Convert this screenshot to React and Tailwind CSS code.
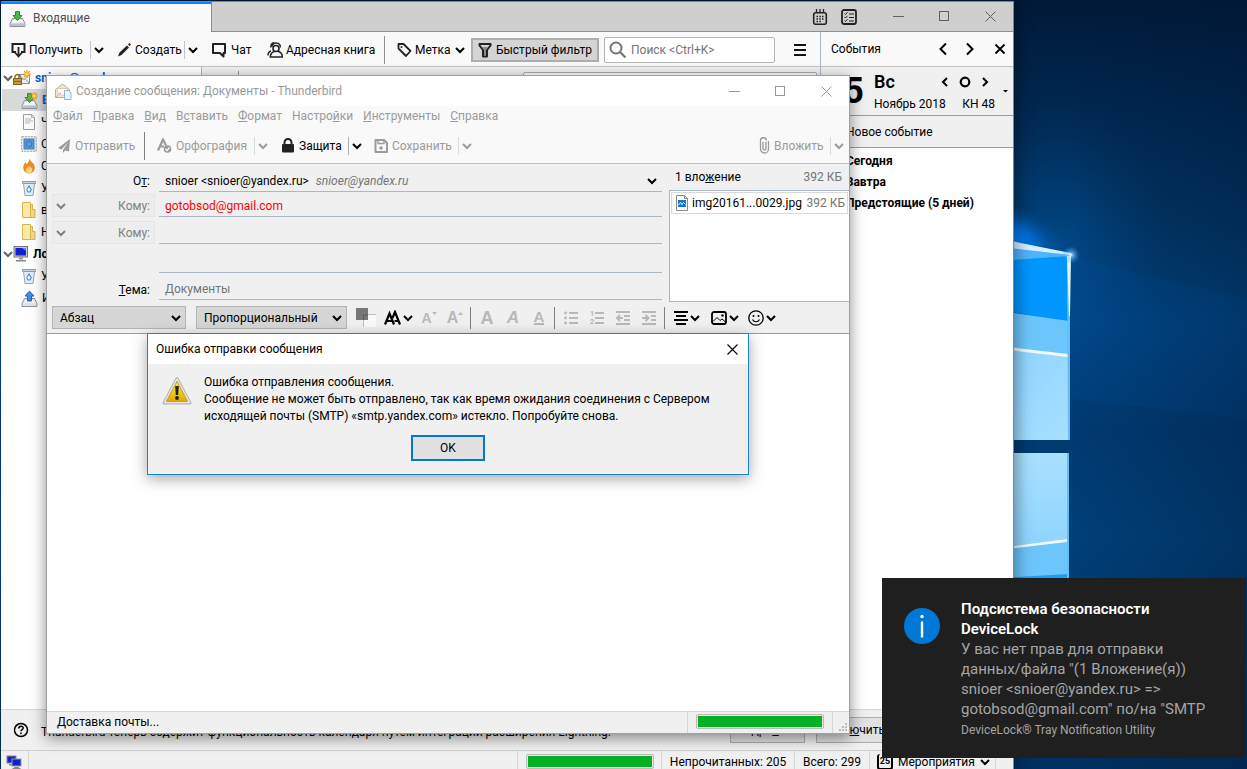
import React from "react";

/* ---------- small drawing helpers ---------- */

function Svg({ w = 16, h = 16, box, className = "", children }) {
  return (
    <svg
      width={w}
      height={h}
      viewBox={box || `0 0 ${w} ${h}`}
      fill="none"
      aria-hidden="true"
      className={`shrink-0 ${className}`}
    >
      {children}
    </svg>
  );
}

function Chevron({ className = "" }) {
  return (
    <Svg w={10} h={10} className={className}>
      <path d="M1 3l4 4 4-4" stroke="currentColor" strokeWidth="2" />
    </Svg>
  );
}

function Divider({ className = "h-[18px] bg-[#c4c4c4]" }) {
  return <span className={`w-px shrink-0 ${className}`} />;
}

function WindowControls({ height, color }) {
  const button = `flex w-[46px] items-center justify-center ${height} ${color}`;
  return (
    <div className="flex shrink-0">
      <button type="button" aria-label="Свернуть" className={button}>
        <Svg w={11} h={11}><path d="M0 5.500h11" stroke="currentColor" /></Svg>
      </button>
      <button type="button" aria-label="Развернуть" className={button}>
        <Svg w={11} h={11}><rect x=".5" y=".5" width="9" height="9" stroke="currentColor" /></Svg>
      </button>
      <button type="button" aria-label="Закрыть" className={button}>
        <Svg w={11} h={11}><path d="M.5.5l10 10M10.500.5l-10 10" stroke="currentColor" /></Svg>
      </button>
    </div>
  );
}

function ProgressBar({ label }) {
  return (
    <div
      role="progressbar"
      aria-label={label}
      className="h-[15px] w-32 shrink-0 rounded-[2px] border border-[#bcbcbc] bg-[#e6e6e6] p-px"
    >
      <div className="h-full w-full bg-[#06b025]" />
    </div>
  );
}

/* ---------- icons ---------- */

function InboxIcon({ star }) {
  return (
    <Svg w={17} h={17}>
      <path d="M3.500 8.500h10l2.500 5v3h-15v-3z" fill="#dfe5ec" stroke="#8b929b" />
      <path d="M1.500 13.500h14v2.500h-14z" fill="#b9c1cb" />
      <path d="M4 10h9l1 3H3z" fill="#f7f9fb" />
      <path d="M6.500 1.500h4v4h2.500L8.500 10.500 4 5.500h2.500z" fill="#4cba3c" stroke="#2b8f20" />
      {star && <Star x={9} y={0} />}
    </Svg>
  );
}

function Star({ x, y }) {
  return (
    <g transform={`translate(${x} ${y})`}>
      <path d="M4 0v8M0 4h8M1 1l6 6M7 1L1 7" stroke="#e59a20" strokeWidth="1.200" />
      <circle cx="4" cy="4" r="1.800" fill="#ffd75e" />
    </g>
  );
}

function AccountIcon() {
  return (
    <Svg w={18} h={17}>
      <path d="M5.500 4.500h11v9h-11z" fill="#f0f0f0" stroke="#8c8c8c" />
      <path d="M5.500 4.500l5.500 5 5.500-5M6 13l4-4.500M16 13l-4-4.500" stroke="#9a9a9a" />
      <path d="M2 9V7a2.500 2.500 0 015 0v2" stroke="#8a6b2c" strokeWidth="1.400" />
      <rect x=".5" y="8.500" width="8" height="6" fill="#c9983c" stroke="#8a6420" />
      <path d="M1 11.500h7" stroke="#8a6420" />
      <Star x={10} y={0} />
    </Svg>
  );
}

function DraftIcon() {
  return (
    <Svg w={16} h={16}>
      <path d="M2.500.5h8l3 3v12h-11z" fill="#fbfbfb" stroke="#9b9b9b" />
      <path d="M10.500.5v3h3M4 5h6M4 7h8M4 9h5" stroke="#b5b5b5" />
    </Svg>
  );
}

function StampIcon() {
  return (
    <Svg w={16} h={16}>
      <rect x=".75" y=".75" width="14.500" height="14.500" fill="#f4f4f4" stroke="#8d959d" strokeDasharray="2 1" />
      <rect x="3" y="3" width="10" height="10" fill="#5b9bd5" stroke="#3c78b4" />
      <circle cx="8" cy="8" r="3" stroke="#3c78b4" />
    </Svg>
  );
}

function FireIcon() {
  return (
    <Svg w={16} h={16}>
      <path d="M8 .5c1 3 5.800 4.500 5.800 9A5.800 5.800 0 018 15.500 5.800 5.800 0 012.200 9.500C2.200 7 4 6 4 4c1 .5 1.500 1.500 1.500 2.500C7 5 8.200 3 8 .5z" fill="#ef8a1f" />
      <path d="M8 8c1.500 1.500 3.300 2 3.300 4A3.200 3.200 0 018 15a3.200 3.200 0 01-3.300-3c0-1.800 2.300-2.200 3.300-4z" fill="#ffd67d" />
    </Svg>
  );
}

function TrashIcon() {
  return (
    <Svg w={16} h={16}>
      <path d="M2.500 3.500h11l-1.500 12H4z" fill="#e4edf5" stroke="#93a5b6" />
      <path d="M1.500 1.500h13v2h-13z" fill="#c5d5e4" stroke="#8a9cae" />
      <path d="M6 9l2-3 2 3M10.500 9l-1.500 3H7L5.500 9.500" stroke="#4a90d0" strokeWidth="1.200" />
    </Svg>
  );
}

function FolderIcon() {
  return (
    <Svg w={16} h={16}>
      <path d="M1.500.5h8v15h-8z" fill="#fbe9a6" stroke="#d9b44a" />
      <path d="M9.500 2.500h2v5h2.500v8H9.500z" fill="#f4d987" stroke="#d9b44a" />
    </Svg>
  );
}

function ComputerIcon() {
  return (
    <Svg w={16} h={16}>
      <rect x="1" y=".5" width="13.500" height="10.500" fill="#c8c8c8" stroke="#777" />
      <rect x="2.500" y="2" width="10.500" height="7.500" fill="#1220d0" />
      <path d="M9 2h4v3z" fill="#6f80ff" />
      <path d="M6 11.500h4v2H6z" fill="#999" />
      <path d="M3 14h10v1.500H3z" fill="#888" />
    </Svg>
  );
}

function OutboxIcon() {
  return (
    <Svg w={17} h={17}>
      <path d="M3.500 8.500h10l2.500 5v3h-15v-3z" fill="#dfe5ec" stroke="#8b929b" />
      <path d="M4 10h9l1 3H3z" fill="#f7f9fb" />
      <path d="M8.500 1l4.500 5h-2.500v5h-4V6H4z" fill="#3f8ee0" stroke="#2265b0" />
    </Svg>
  );
}

function CalendarIcon() {
  return (
    <Svg w={16} h={16}>
      <rect x="1.700" y="3.700" width="12.600" height="11.600" rx="2" stroke="#222" strokeWidth="1.600" />
      <path d="M4.500 0v4M8 0v4M11.500 0v4" stroke="#222" strokeWidth="1.300" />
      <path d="M4.500 7.500h1.500M7.300 7.500h1.500M10 7.500h1.500M4.500 10h1.500M7.300 10h1.500M10 10h1.500M4.500 12.500h1.500M7.300 12.500h1.500" stroke="#222" strokeWidth="1.400" />
    </Svg>
  );
}

function TasksIcon() {
  return (
    <Svg w={16} h={16}>
      <rect x="1" y="1" width="14" height="14" rx="2" stroke="#222" strokeWidth="1.800" />
      <path d="M3.500 4.500l1 1 2-2.200M3.500 8l1 1 2-2.200M3.500 11.500l1 1 2-2.200M8 5h5M8 8.500h5M8 12h5" stroke="#222" />
    </Svg>
  );
}

/* ---------- desktop picture ---------- */

function Wallpaper() {
  return (
    <svg
      className="absolute inset-0 h-full w-full"
      viewBox="0 0 1247 769"
      preserveAspectRatio="xMaxYMid slice"
      aria-hidden="true"
    >
      <defs>
        <linearGradient id="sky" x1="0" y1="0" x2="0" y2="1">
          <stop offset="0" stopColor="#001a38" />
          <stop offset=".14" stopColor="#002750" />
          <stop offset=".28" stopColor="#003564" />
          <stop offset=".42" stopColor="#004480" />
          <stop offset=".56" stopColor="#003a70" />
          <stop offset=".7" stopColor="#004078" />
          <stop offset="1" stopColor="#003060" />
        </linearGradient>
        <radialGradient id="glow">
          <stop offset="0" stopColor="#0a8cff" />
          <stop offset=".4" stopColor="#0074e6" stopOpacity=".8" />
          <stop offset="1" stopColor="#004a90" stopOpacity="0" />
        </radialGradient>
        <radialGradient id="haze">
          <stop offset="0" stopColor="#0068c0" stopOpacity=".35" />
          <stop offset="1" stopColor="#004a90" stopOpacity="0" />
        </radialGradient>
        <radialGradient id="spark">
          <stop offset="0" stopColor="#ffffff" />
          <stop offset=".25" stopColor="#a8dcff" stopOpacity=".6" />
          <stop offset="1" stopColor="#2090ff" stopOpacity="0" />
        </radialGradient>
        <linearGradient id="shade" x1="0" y1="0" x2="1" y2="0">
          <stop offset="0" stopColor="#001530" stopOpacity="0" />
          <stop offset="1" stopColor="#001530" stopOpacity=".3" />
        </linearGradient>
        <linearGradient id="paneTop" x1="0" y1="0" x2="1" y2="1">
          <stop offset="0" stopColor="#8cd2ff" />
          <stop offset="1" stopColor="#a8e0ff" />
        </linearGradient>
        <linearGradient id="paneBottom" x1="0" y1="0" x2="0" y2="1">
          <stop offset="0" stopColor="#a8e0ff" />
          <stop offset="1" stopColor="#8ed4ff" />
        </linearGradient>
      </defs>
      <rect width="1247" height="769" fill="url(#sky)" />
      <ellipse cx="1060" cy="250" rx="110" ry="150" fill="url(#haze)" />
      <path d="M1072 257l175 42v120l-175-20z" fill="#0058a8" opacity=".15" />
      <rect x="1072" width="175" height="769" fill="url(#shade)" />
      <ellipse cx="1008" cy="236" rx="64" ry="32" fill="url(#glow)" transform="rotate(20 1008 236)" />
      <path d="M1000 238l70 16v6h-70z" fill="#4fb4ff" />
      <path d="M1000 239l71 14v2l-71-8z" fill="#d6efff" />
      <path d="M1000 261l69-5v66l-69-12z" fill="#0096ff" />
      <path d="M1000 311l69 10v119h-69z" fill="#6cc6fc" />
      <path d="M1000 348l69 8v84h-69z" fill="url(#paneTop)" />
      <path d="M1000 346l68 8v3l-68-8z" fill="#f2faff" />
      <path d="M1000 453h69v90l-69 7z" fill="url(#paneBottom)" />
      <path d="M1000 549l69-8v48h-69z" fill="#6cc6fc" />
      <path d="M1000 548l67-9v3l-67 8z" fill="#f2faff" />
      <path d="M1000 578l69-4v6h-69z" fill="#1b9cf5" />
      <path d="M1067 256h3v184h-2zM1067 453h2v140h-2z" fill="#5fc0f8" />
      <path d="M1067 256h4l-1 60h-1z" fill="#e4f5ff" />
      <circle cx="1071" cy="255" r="9" fill="url(#spark)" />
    </svg>
  );
}

/* ---------- main window ---------- */

const folders = [
  { name: "snioer@yandex.ru", icon: <AccountIcon />, root: true, blue: true },
  { name: "Входящие", icon: <InboxIcon star />, selected: true, blue: true },
  { name: "Черновики", icon: <DraftIcon /> },
  { name: "Отправленные", icon: <StampIcon /> },
  { name: "Спам", icon: <FireIcon /> },
  { name: "Удалённые", icon: <TrashIcon /> },
  { name: "важное", icon: <FolderIcon /> },
  { name: "Новости", icon: <FolderIcon /> },
  { name: "Локальные папки", icon: <ComputerIcon />, root: true },
  { name: "Удалённые", icon: <TrashIcon /> },
  { name: "Исходящие", icon: <OutboxIcon /> },
];

function FolderTree() {
  return (
    <ul className="w-[201px] shrink-0 border-r border-[#a9b7c9] bg-white">
      {folders.map((f, i) => (
        <li
          key={i}
          className={`ml-px flex h-[22px] items-center gap-1 whitespace-nowrap ${
            f.root ? "pl-px font-bold" : "pl-[19px]"
          } ${f.selected ? "bg-[#d9d9d9] font-bold" : ""} ${f.blue ? "text-[#0060d0]" : "text-black"}`}
        >
          {f.root && <Chevron className="-mr-1 text-[#606060]" />}
          {f.icon}
          <span>{f.name}</span>
        </li>
      ))}
    </ul>
  );
}

function MainToolbar() {
  return (
    <div className="flex h-[35px] shrink-0 items-center whitespace-nowrap border-b border-[#c2c2c2] bg-[#f9f9f9] pl-[10px] pt-px text-black">
      <button type="button" className="flex w-[79px] items-center gap-[3px]">
        <Svg w={15} h={16}>
          <path d="M5 10H1.500V2h12v8H10" stroke="#222" strokeWidth="2" />
          <path d="M7.500 5v9M4 10.500l3.500 4 3.500-4" stroke="#222" strokeWidth="1.800" />
        </Svg>
        Получить
      </button>
      <Divider />
      <button type="button" aria-label="Получить: ещё" className="flex w-[26px] pl-[3px]"><Chevron /></button>
      <button type="button" className="flex w-[67px] items-center gap-[3px]">
        <Svg w={15} h={16}>
          <path d="M1 14.500l1.500-4L10 3.500l2 2L4.500 13z" fill="#222" />
          <path d="M11 2.500l1.500-1.500 1.500 1.500L12.500 4z" fill="#222" />
        </Svg>
        Создать
      </button>
      <Divider />
      <button type="button" aria-label="Создать: ещё" className="flex w-[26px] pl-[3px]"><Chevron /></button>
      <button type="button" className="flex w-14 items-center gap-1">
        <Svg w={16} h={16}>
          <path d="M2 2h12v9h-1.500v3.500L9 11H2z" stroke="#222" strokeWidth="2" strokeLinejoin="round" />
        </Svg>
        Чат
      </button>
      <button type="button" className="flex w-[117px] items-center gap-[3px]">
        <Svg w={16} h={16}>
          <circle cx="9" cy="6.500" r="3" stroke="#222" strokeWidth="1.600" />
          <path d="M5 4.500A4.300 4.300 0 019.500 1c2.500 0 4 2 3.800 4.500M4 5.500C3.500 3 5 1 7 .8M7.500 9.500C5 10 3.500 12 3.300 15h12c0-3-1.500-5-4.300-5.500M1 13.500c0-2.500 1-4 3-4.500" stroke="#222" strokeWidth="1.500" />
        </Svg>
        Адресная книга
      </button>
      <Divider className="h-[28px] bg-[#909090]" />
      <button type="button" className="flex w-[86px] items-center gap-[3px] pl-3">
        <Svg w={15} h={16}>
          <path d="M1.500 2h5l7 7-4.500 5-7.500-7.500z" stroke="#222" strokeWidth="1.800" strokeLinejoin="round" />
          <circle cx="4.500" cy="5" r="1" fill="#222" />
        </Svg>
        Метка
        <Chevron className="ml-px" />
      </button>
      <button
        type="button"
        className="flex h-6 w-32 shrink-0 items-center justify-center gap-1 border-2 border-[#adadad] bg-[#d4d4d4]"
      >
        <Svg w={14} h={16}>
          <path d="M1.500 2h11v1.500L9 8v6.500H5V8L1.500 3.500z" stroke="#222" strokeWidth="2" strokeLinejoin="round" />
          <path d="M4 5h6L8 8v5H6V8z" fill="#8a8a8a" />
        </Svg>
        Быстрый фильтр
      </button>
      <label className="ml-[5px] flex h-[26px] w-[171px] shrink-0 items-center gap-1 rounded-[2px] border border-[#b6b6b6] bg-white pl-1">
        <Svg w={18} h={18}>
          <circle cx="7" cy="7" r="5.500" stroke="#757575" strokeWidth="2" />
          <path d="M11 11l5.500 5.500" stroke="#757575" strokeWidth="2.200" />
        </Svg>
        <input
          type="search"
          aria-label="Поиск"
          placeholder="Поиск <Ctrl+K>"
          className="w-full bg-transparent outline-none placeholder:text-[#757575]"
        />
      </label>
      <button type="button" aria-label="Меню" className="ml-[18px] flex">
        <Svg w={14} h={14}><path d="M1 2h12M1 7h12M1 12h12" stroke="#111" strokeWidth="2" /></Svg>
      </button>
    </div>
  );
}

function TodayPane() {
  return (
    <aside className="flex w-[193px] shrink-0 flex-col border-l border-[#a9b7c9] bg-white">
      <header className="flex h-[35px] items-center border-b border-[#c2c2c2] bg-[#f9f9f9] pl-[10px] pr-[7px]">
        <h2 className="flex-1">События</h2>
        <button type="button" aria-label="Назад" className="mr-[17px]">
          <Svg w={10} h={14}><path d="M8 1.500L2.500 7 8 12.500" stroke="#000" strokeWidth="2" /></Svg>
        </button>
        <button type="button" aria-label="Вперёд" className="mr-[19px]">
          <Svg w={10} h={14}><path d="M2 1.500L7.500 7 2 12.500" stroke="#000" strokeWidth="2" /></Svg>
        </button>
        <button type="button" aria-label="Закрыть панель">
          <Svg w={12} h={12}><path d="M1.500 1.500l9 9M10.500 1.500l-9 9" stroke="#000" strokeWidth="1.800" /></Svg>
        </button>
      </header>
      <div className="flex h-[49px] shrink-0 items-center border-b border-[#9b9b9b] bg-[#f0f0f0]">
        <span className="w-[43px] text-right text-[36px] font-bold leading-9">25</span>
        <div className="ml-[10px] flex-1 pt-px">
          <div className="flex h-6 items-center pr-[6px]">
            <span className="flex-1 text-[18px] font-semibold leading-6">Вс</span>
            <button type="button" aria-label="Предыдущий день" className="mr-[10px]">
              <Svg w={8} h={10}><path d="M6 1L2 5l4 4" stroke="#000" strokeWidth="2" /></Svg>
            </button>
            <button type="button" aria-label="Сегодня" className="mr-[10px]">
              <Svg w={12} h={12}><circle cx="6" cy="6" r="4.300" stroke="#000" strokeWidth="2.200" /></Svg>
            </button>
            <button type="button" aria-label="Следующий день">
              <Svg w={8} h={10}><path d="M2 1l4 4-4 4" stroke="#000" strokeWidth="2" /></Svg>
            </button>
          </div>
          <div className="flex h-5 items-center justify-between whitespace-nowrap">
            <span>Ноябрь 2018</span>
            <span>КН 48</span>
          </div>
        </div>
        <button type="button" aria-label="Показать месяц" className="ml-2 mr-[5px]">
          <Svg w={5} h={4}><path d="M0 1h5L2.500 3.500z" fill="#000" /></Svg>
        </button>
      </div>
      <button type="button" className="flex h-8 shrink-0 items-center border-b border-[#9b9b9b] bg-[#f0f0f0] pl-[25px]">
        Новое событие
      </button>
      <ul className="pt-[2px] font-bold">
        <li className="flex h-[21px] items-center pl-[25px]">Сегодня</li>
        <li className="flex h-[21px] items-center pl-[25px]">Завтра</li>
        <li className="flex h-[21px] items-center whitespace-nowrap pl-[25px]">Предстоящие (5 дней)</li>
      </ul>
    </aside>
  );
}

function MainWindow() {
  return (
    <section className="absolute -bottom-1 left-px right-[233px] top-px flex flex-col border-r border-t border-[#7f868e] bg-[#f0f0f0] shadow-[4px_0_14px_rgba(0,0,0,0.35)]">
      <header className="flex h-[30px] shrink-0 bg-[#cfcfcf]">
        <div className="flex w-[211px] items-center gap-[7px] border-r border-t-2 border-r-[#8f8f8f] border-t-[#0a84ff] bg-[#f9f9f9] pl-2 text-[#505050]">
          <InboxIcon />
          <span>Входящие</span>
        </div>
        <div className="flex flex-1 items-center justify-end gap-[13px] border-b border-[#8f8f8f] pr-[18px]">
          <button type="button" aria-label="Календарь"><CalendarIcon /></button>
          <button type="button" aria-label="Задачи"><TasksIcon /></button>
        </div>
        <div className="border-b border-[#8f8f8f]">
          <WindowControls height="h-[29px]" color="text-[#606060]" />
        </div>
      </header>

      <div className="flex min-h-0 flex-1">
        <div className="flex min-w-0 flex-1 flex-col">
          <MainToolbar />
          <div className="flex min-h-0 flex-1">
            <FolderTree />
            <div className="flex-1 bg-[#f0f0f0]">
              <div className="flex justify-between pl-9 pr-[3px] pt-1">
                <Divider className="h-5 bg-[#909090]" />
                <input
                  type="text"
                  aria-label="Отфильтровать сообщения"
                  className="mt-px h-6 w-[294px] rounded-[2px] border border-[#a8a8a8] bg-white"
                />
              </div>
            </div>
          </div>
        </div>
        <TodayPane />
      </div>

      <div className="flex h-[41px] shrink-0 items-center whitespace-nowrap border-t border-[#d5d5d5] pl-3 text-black">
        <Svg w={16} h={16} className="mr-3">
          <circle cx="8" cy="8" r="6.500" stroke="#000" strokeWidth="1.500" />
          <path d="M5.800 6.500c0-3 4.400-3 4.400-.4 0 1.500-2.200 1.600-2.200 3.200M8 10.500v1.700" stroke="#000" strokeWidth="1.500" />
        </Svg>
        <span className="w-[689px] pt-[3px]">
          Thunderbird теперь содержит функциональность календаря путём интеграции расширения Lightning.
        </span>
        <button type="button" className="mr-[11px] h-[26px] w-[75px] shrink-0 border border-[#adadad] bg-[#e1e1e1]">
          Подро<u>б</u>нее
        </button>
        <button type="button" className="h-[26px] w-[75px] shrink-0 border border-[#adadad] bg-[#e1e1e1]">
          Откл<u>ю</u>чить
        </button>
      </div>

      <footer className="flex h-[23px] shrink-0 items-stretch whitespace-nowrap border-t border-[#d0d0d0] text-black">
        <div className="flex w-7 items-center border-r border-[#d5d5d5] pl-[5px]">
          <Svg w={17} h={15}>
            <rect x="1" y="1" width="9" height="7" fill="#1220d0" stroke="#888" />
            <path d="M3 9h5v1.500H3z" fill="#888" />
            <rect x="6" y="4" width="9" height="7" fill="#1220d0" stroke="#999" />
            <path d="M8 12h5v1H8zM6.500 13h8v1.500h-8z" fill="#888" />
          </Svg>
        </div>
        <div className="flex-1" />
        <div className="flex w-[145px] items-center justify-center border-l border-r border-[#d5d5d5] pb-px">
          <ProgressBar label="Загрузка" />
        </div>
        <div className="flex w-[133px] items-center justify-center border-r border-[#d5d5d5]">Непрочитанных: 205</div>
        <div className="flex w-[75px] items-center justify-center border-r border-[#d5d5d5]">Всего: 299</div>
        <button type="button" className="flex w-[126px] items-center gap-[5px] border-r border-[#d5d5d5] pl-[7px]">
          <span className="flex h-4 w-4 items-center justify-center rounded-[3px] border-2 border-t-0 border-black text-[9px] font-bold leading-none">
            25
          </span>
          Мероприятия
          <Chevron />
        </button>
        <div className="w-[17px]" />
      </footer>
    </section>
  );
}

/* ---------- compose window ---------- */

function SplitButton({ icon, label, width, disabled = true, name }) {
  const tone = disabled ? "text-[#9b9b9b]" : "text-black";
  return (
    <div className={`flex items-center ${tone}`}>
      <button type="button" disabled={disabled} className={`flex items-center gap-1 ${width}`}>
        {icon}
        {label}
      </button>
      <Divider className={disabled ? "h-[18px] bg-[#dadada]" : "h-[18px] bg-[#b0b0b0]"} />
      <button type="button" aria-label={name} disabled={disabled} className="ml-[3px] flex"><Chevron /></button>
    </div>
  );
}

function ComposeMenu() {
  return (
    <nav className="flex h-5 shrink-0 items-center gap-[10px] whitespace-nowrap bg-[#f9f9f9] pl-[6px] text-[#9b9b9b]">
      <button type="button"><u>Ф</u>айл</button>
      <button type="button"><u>П</u>равка</button>
      <button type="button"><u>В</u>ид</button>
      <button type="button">В<u>с</u>тавить</button>
      <button type="button"><u>Ф</u>ормат</button>
      <button type="button">Настро<u>й</u>ки</button>
      <button type="button"><u>И</u>нструменты</button>
      <button type="button"><u>С</u>правка</button>
    </nav>
  );
}

function ComposeToolbar() {
  return (
    <div className="flex h-[38px] shrink-0 items-center whitespace-nowrap border-b border-[#c2c2c2] bg-[#f9f9f9] pl-[11px] pt-[2px]">
      <button type="button" disabled className="flex w-[86px] items-center gap-1 text-[#9b9b9b]">
        <Svg w={13} h={14}>
          <path d="M12 0L0 9l3.500 1.500L10.500 3 5 11v3l2-2.500 4 1z" fill="currentColor" />
        </Svg>
        Отправить
      </button>
      <Divider className="mr-3 h-[28px] bg-[#808080]" />
      <SplitButton
        width="w-[97px]"
        name="Орфография: ещё"
        label="Орфография"
        icon={
          <Svg w={15} h={15}>
            <path d="M1 12.500L6 1.500l3 6M3 8.500h4" stroke="currentColor" strokeWidth="2.200" />
            <circle cx="10.500" cy="11" r="3.800" fill="currentColor" />
            <path d="M8.500 11l1.500 1.500 2.500-3" stroke="#f9f9f9" strokeWidth="1.200" />
          </Svg>
        }
      />
      <div className="ml-[13px]">
        <SplitButton
          width="w-[67px]"
          disabled={false}
          name="Защита: ещё"
          label="Защита"
          icon={
            <Svg w={14} h={15}>
              <path d="M3.500 7V4.500a3.500 3.500 0 017 0V7" stroke="#222" strokeWidth="2" />
              <rect x="1" y="6" width="12" height="8.500" rx="1" fill="#222" />
            </Svg>
          }
        />
      </div>
      <div className="ml-3">
        <SplitButton
          width="w-[84px]"
          name="Сохранить: ещё"
          label="Сохранить"
          icon={
            <Svg w={14} h={14}>
              <path d="M1.500 1h8.500l3 3v9H1.500z" stroke="currentColor" strokeWidth="2" strokeLinejoin="round" />
              <path d="M4 1v3.500h6V1" stroke="currentColor" strokeWidth="1.300" />
              <circle cx="7" cy="9" r="1.800" fill="currentColor" />
            </Svg>
          }
        />
      </div>
      <div className="ml-auto mr-[5px]">
        <SplitButton
          width="w-[71px]"
          name="Вложить: ещё"
          label="Вложить"
          icon={
            <Svg w={11} h={17}>
              <path d="M7 5v6.500a1.500 1.500 0 01-3 0V5M9.500 4v8a4 4 0 01-8 0V4a3 3 0 016-.5" stroke="currentColor" strokeWidth="1.300" />
            </Svg>
          }
        />
      </div>
    </div>
  );
}

function RecipientType({ id }) {
  return (
    <div className="relative flex h-[23px] w-[103px] shrink-0 items-center border border-[#e6e6e6] bg-[#ededed] text-[#808080]">
      <Chevron className="pointer-events-none absolute left-[3px]" />
      <select id={id} aria-label="Тип получателя" className="h-full w-full appearance-none bg-transparent pr-1 text-right outline-none">
        <option>Кому:</option>
      </select>
    </div>
  );
}

const line = "ml-1 min-w-0 flex-1 border-b border-[#a9b7c9]";

function AddressArea() {
  return (
    <div className="flex h-[140px] shrink-0 bg-[#f0f0f0]">
      <div className="flex min-w-0 flex-1 flex-col pl-[5px] pt-1">
        <div className="flex h-6 items-center">
          <span id="from" className="w-[103px] shrink-0 pr-[5px] pt-px text-right">О<u>т</u>:</span>
          <button
            type="button"
            aria-haspopup="listbox"
            aria-labelledby="from"
            className={`flex h-full items-center justify-between whitespace-nowrap pl-[6px] pr-[5px] pt-[2px] ${line}`}
          >
            <span className="flex gap-[7px]">
              snioer &lt;snioer@yandex.ru&gt;
              <i className="text-[#757575]">snioer@yandex.ru</i>
            </span>
            <Chevron />
          </button>
        </div>
        <div className="flex h-[25px] items-end">
          <RecipientType id="type-1" />
          <input aria-label="Кому" defaultValue="gotobsod@gmail.com" className={`h-[25px] bg-transparent pl-[6px] pt-1 text-[#ff0000] outline-none ${line}`} />
        </div>
        <div className="flex h-[27px] items-end">
          <RecipientType id="type-2" />
          <input aria-label="Кому" className={`h-[27px] bg-transparent pl-[6px] outline-none ${line}`} />
        </div>
        <div className="flex h-[29px]">
          <span className="w-[103px] shrink-0" />
          <span className={line} />
        </div>
        <div className="flex h-[27px] items-end">
          <label htmlFor="subject" className="w-[103px] shrink-0 pb-[2px] pr-[5px] text-right"><u>Т</u>ема:</label>
          <input id="subject" defaultValue="Документы" className={`h-[27px] bg-transparent pl-[6px] pt-[6px] text-[#757575] outline-none ${line}`} />
        </div>
      </div>
      <div className="ml-[7px] flex w-[180px] shrink-0 flex-col pb-[2px]">
        <div className="flex h-[26px] shrink-0 items-center justify-between pl-[6px] pr-[7px]">
          <span>1 вло<u>ж</u>ение</span>
          <span className="text-[#757575]">392 КБ</span>
        </div>
        <div className="flex-1 border border-r-0 border-[#a9b7c9] bg-white p-px">
          <div className="flex h-[22px] items-center whitespace-nowrap border border-[#d9d9d9] pl-[3px] pr-[2px]">
            <Svg w={14} h={16}>
              <path d="M1.500.5h8l3 3v12h-11z" fill="#fff" stroke="#888" />
              <path d="M9.500.5v3h3" stroke="#888" />
              <rect x="3" y="5" width="8" height="7" fill="#0a78d4" />
              <path d="M3.500 10l2-2.500 1.500 2 1.500-2 2 2" stroke="#fff" />
            </Svg>
            <span className="ml-[3px] flex-1">img20161...0029.jpg</span>
            <span className="text-[#757575]">392 КБ</span>
          </div>
        </div>
      </div>
    </div>
  );
}

function FormatSelect({ label, value, width }) {
  return (
    <div className={`relative flex h-[23px] shrink-0 items-center ${width}`}>
      <select aria-label={label} className="h-full w-full appearance-none border border-[#b4b4b4] bg-[#d6d6d6] pl-[7px] outline-none">
        <option>{value}</option>
      </select>
      <Chevron className="pointer-events-none absolute right-[5px]" />
    </div>
  );
}

function Tool({ name, children }) {
  return (
    <button type="button" disabled aria-label={name} className="flex w-[26px] shrink-0 items-center justify-center text-[#b8b8b8]">
      {children}
    </button>
  );
}

function MenuTool({ name, children }) {
  return (
    <button type="button" aria-label={name} className="flex w-[37px] shrink-0 items-center gap-[2px]">
      {children}
      <Chevron />
    </button>
  );
}

const letter = "font-['Liberation_Sans',sans-serif] text-[18px] font-bold leading-5";

function FormatBar() {
  return (
    <div className="flex h-[30px] shrink-0 items-center border-b border-[#9b9b9b] bg-[#f0f0f0] pb-[2px] pl-[5px]">
      <FormatSelect label="Стиль абзаца" value="Абзац" width="w-[134px] mr-[10px]" />
      <FormatSelect label="Шрифт" value="Пропорциональный" width="w-[151px] mr-[9px]" />
      <button type="button" aria-label="Цвет текста" className="mr-2">
        <Svg w={20} h={19}>
          <rect x="8" y="6" width="12" height="13" fill="#fafafa" />
          <path d="M7.500 19V6.500H20" stroke="#bdbdbd" />
          <rect x="0" y="0" width="12" height="12" fill="#777" />
          <path d="M12 7H7.500v5" stroke="#5c5c5c" />
        </Svg>
      </button>
      <button type="button" aria-label="Размер шрифта" className="mr-1 flex w-7 items-center gap-[2px]">
        <Svg w={17} h={16}>
          <path d="M1 14.500L5.500 3.500 10 14.500M3 11h5" stroke="#000" strokeWidth="2.200" />
          <path d="M8.500 8L11 2l5 12.500M10.500 11h4" stroke="#000" strokeWidth="2.200" />
        </Svg>
        <Chevron />
      </button>
      <Tool name="Уменьшить шрифт">
        <span className="font-['Liberation_Sans',sans-serif] text-[14px] font-bold leading-5">A</span>
        <Svg w={5} h={14}><path d="M0 1h5L2.500 4z" fill="currentColor" /></Svg>
      </Tool>
      <Tool name="Увеличить шрифт">
        <span className="font-['Liberation_Sans',sans-serif] text-[16px] font-bold leading-5">A</span>
        <Svg w={5} h={14}><path d="M0 4h5L2.500 1z" fill="currentColor" /></Svg>
      </Tool>
      <Divider className="ml-[2px] mr-[3px] h-[22px] bg-[#808080]" />
      <Tool name="Полужирный"><span className={letter}>A</span></Tool>
      <Tool name="Курсив"><span className="font-['Liberation_Sans',sans-serif] text-[17px] font-bold italic leading-5">A</span></Tool>
      <Tool name="Подчёркнутый">
        <span className="border-b-2 border-[#b8b8b8] font-['Liberation_Sans',sans-serif] text-[15px] font-bold leading-[13px]">A</span>
      </Tool>
      <Divider className="ml-[2px] mr-[3px] h-[22px] bg-[#808080]" />
      <Tool name="Маркированный список">
        <Svg w={14} h={14}>
          <path d="M5 2h9M5 7h9M5 12h9" stroke="currentColor" strokeWidth="2" />
          <circle cx="1.500" cy="2" r="1.400" fill="currentColor" />
          <circle cx="1.500" cy="7" r="1.400" fill="currentColor" />
          <circle cx="1.500" cy="12" r="1.400" fill="currentColor" />
        </Svg>
      </Tool>
      <Tool name="Нумерованный список">
        <span className="flex flex-col text-[8px] font-bold leading-[8px]"><span>1</span><span>2</span></span>
        <Svg w={10} h={14}><path d="M1 2h9M1 7h9M1 12h9" stroke="currentColor" strokeWidth="2" /></Svg>
      </Tool>
      <Tool name="Уменьшить отступ">
        <Svg w={14} h={14}><path d="M0 1h14M8 5h6M8 9h6M0 13h14M7 7H1M4 4L1 7l3 3" stroke="currentColor" strokeWidth="2" /></Svg>
      </Tool>
      <Tool name="Увеличить отступ">
        <Svg w={14} h={14}><path d="M0 1h14M9 5h5M9 9h5M0 13h14M0 7h6M3.500 4l3 3-3 3" stroke="currentColor" strokeWidth="2" /></Svg>
      </Tool>
      <Divider className="ml-[2px] mr-[9px] h-[22px] bg-[#808080]" />
      <MenuTool name="Выравнивание">
        <Svg w={14} h={14}><path d="M0 1h14M2 5h10M0 9h14M2 13h10" stroke="#000" strokeWidth="2" /></Svg>
      </MenuTool>
      <MenuTool name="Вставить">
        <Svg w={16} h={14}>
          <rect x="1" y="1" width="14" height="12" rx="2" stroke="#000" strokeWidth="1.800" />
          <path d="M2 10.500l4-4 3 3 2-1.500 3 2.500" stroke="#000" />
          <circle cx="11.500" cy="4.500" r="1.200" fill="#000" />
        </Svg>
      </MenuTool>
      <MenuTool name="Смайлик">
        <Svg w={16} h={16}>
          <circle cx="8" cy="8" r="7.200" stroke="#000" strokeWidth="1.300" />
          <circle cx="5.500" cy="6" r="1" fill="#000" />
          <circle cx="10.500" cy="6" r="1" fill="#000" />
          <path d="M4.500 9.500c1.500 3 5.500 3 7 0" stroke="#000" strokeWidth="1.200" />
        </Svg>
      </MenuTool>
    </div>
  );
}

function ErrorDialog() {
  return (
    <div
      role="alertdialog"
      aria-labelledby="error-title"
      className="absolute left-[100px] right-[100px] top-[257px] flex h-[142px] flex-col border border-[#1883d7] bg-[#f0f0f0] text-black shadow-[0_4px_14px_rgba(0,0,0,0.35)]"
    >
      <header className="flex h-[30px] shrink-0 items-center justify-between bg-white pl-2 pr-[10px]">
        <h2 id="error-title">Ошибка отправки сообщения</h2>
        <button type="button" aria-label="Закрыть">
          <Svg w={11} h={11}><path d="M.5.5l10 10M10.500.5l-10 10" stroke="#000" strokeWidth="1.100" /></Svg>
        </button>
      </header>
      <div className="flex gap-3 pl-[14px] pt-[10px]">
        <Svg w={30} h={30} className="mt-[2px]">
          <defs>
            <linearGradient id="warn" x1="0" y1="0" x2="0" y2="1">
              <stop offset="0" stopColor="#fff23c" />
              <stop offset="1" stopColor="#e0a800" />
            </linearGradient>
          </defs>
          <path d="M15 2.500L28 27H2z" fill="#d8d8d8" stroke="#b4b4b4" strokeWidth="3" strokeLinejoin="round" />
          <path d="M15 3L27.500 26.500h-25z" stroke="#e8e8e8" strokeWidth="1.500" strokeLinejoin="round" />
          <path d="M15 5.500L25.500 25.500h-21z" fill="url(#warn)" stroke="#d0a410" strokeLinejoin="round" />
          <path d="M13.200 10h3.600l-.6 9h-2.400z" fill="#222" />
          <circle cx="15" cy="22" r="1.900" fill="#222" />
        </Svg>
        <div className="whitespace-nowrap leading-[17px]">
          <p>Ошибка отправления сообщения.</p>
          <p>Сообщение не может быть отправлено, так как время ожидания соединения с Сервером</p>
          <p>исходящей почты (SMTP) «smtp.yandex.com» истекло. Попробуйте снова.</p>
        </div>
      </div>
      <button type="button" className="mt-[10px] h-[26px] w-[74px] self-center border-2 border-[#0078d7] bg-[#e1e1e1]">
        OK
      </button>
    </div>
  );
}

function ComposeWindow() {
  return (
    <section className="absolute bottom-[35px] left-[46px] right-[397px] top-[75px] flex flex-col border border-[#a0a0a0] bg-white text-black shadow-[0_4px_14px_rgba(0,0,0,0.45)]">
      <header className="flex h-[30px] shrink-0 items-center gap-1 whitespace-nowrap pl-2 text-[#999]">
        <Svg w={17} h={17}>
          <path d="M.5 6.500L7.500 1l7 5.500v8H.5z" fill="#f3e3d2" stroke="#cda987" />
          <path d="M2.500 5.500h10v4l-5 3-5-3z" fill="#fff" stroke="#ddc8b2" />
          <path d="M1 14l5-4.500M14 14L9 9.500" stroke="#cda987" />
          <path d="M9.500 7.500h4l2.500 2.500v6.500H9.500z" fill="#eaf4fc" stroke="#90b4d4" />
        </Svg>
        <h1 className="flex-1">Создание сообщения: Документы - Thunderbird</h1>
        <WindowControls height="h-[30px]" color="text-[#999]" />
      </header>
      <ComposeMenu />
      <ComposeToolbar />
      <AddressArea />
      <FormatBar />
      <div role="textbox" aria-label="Текст сообщения" className="min-h-0 flex-1 bg-white" />
      <footer className="flex h-[22px] shrink-0 border-t border-[#d5d5d5] bg-[#f0f0f0]">
        <span className="flex flex-1 items-center pb-px pl-[10px]">Доставка почты...</span>
        <div className="flex w-[146px] items-center justify-center border-l border-r border-[#d5d5d5] pb-[2px]">
          <ProgressBar label="Доставка почты" />
        </div>
        <div className="flex w-4 items-end justify-end p-px">
          <Svg w={9} h={9}>
            <path d="M6 0h2v2H6zM3 3h2v2H3zM6 3h2v2H6zM0 6h2v2H0zM3 6h2v2H3zM6 6h2v2H6z" fill="#bcbcbc" />
          </Svg>
        </div>
      </footer>
      <ErrorDialog />
    </section>
  );
}

/* ---------- notification ---------- */

function Toast() {
  return (
    <aside role="status" className="absolute bottom-[11px] right-px flex h-[180px] w-[364px] bg-[#1f1f1f] pl-[22px] pt-[21px]">
      <Svg w={36} h={36} className="mt-[9px]">
        <circle cx="18" cy="18" r="18" fill="#0078d7" />
        <path d="M18 13.500v16" stroke="#fff" strokeWidth="2.400" />
        <circle cx="18" cy="8.500" r="1.700" fill="#fff" />
      </Svg>
      <div className="ml-[21px] whitespace-nowrap text-[15px] leading-5 text-[#a5a5a5]">
        <p className="font-semibold text-white">Подсистема безопасности</p>
        <p className="font-semibold text-white">DeviceLock</p>
        <p>У вас нет прав для отправки</p>
        <p>данных/файла "(1 Вложение(я))</p>
        <p>snioer &lt;snioer@yandex.ru&gt; =&gt;</p>
        <p>gotobsod@gmail.com" по/на "SMTP</p>
        <p className="text-[12px] leading-[22px]">DeviceLock® Tray Notification Utility</p>
      </div>
    </aside>
  );
}

export default function App() {
  return (
    <main className="relative h-screen w-full overflow-hidden bg-[#00386c] font-['Roboto','Open_Sans',sans-serif] text-[12px] leading-4 text-black">
      <Wallpaper />
      <MainWindow />
      <ComposeWindow />
      <Toast />
    </main>
  );
}
